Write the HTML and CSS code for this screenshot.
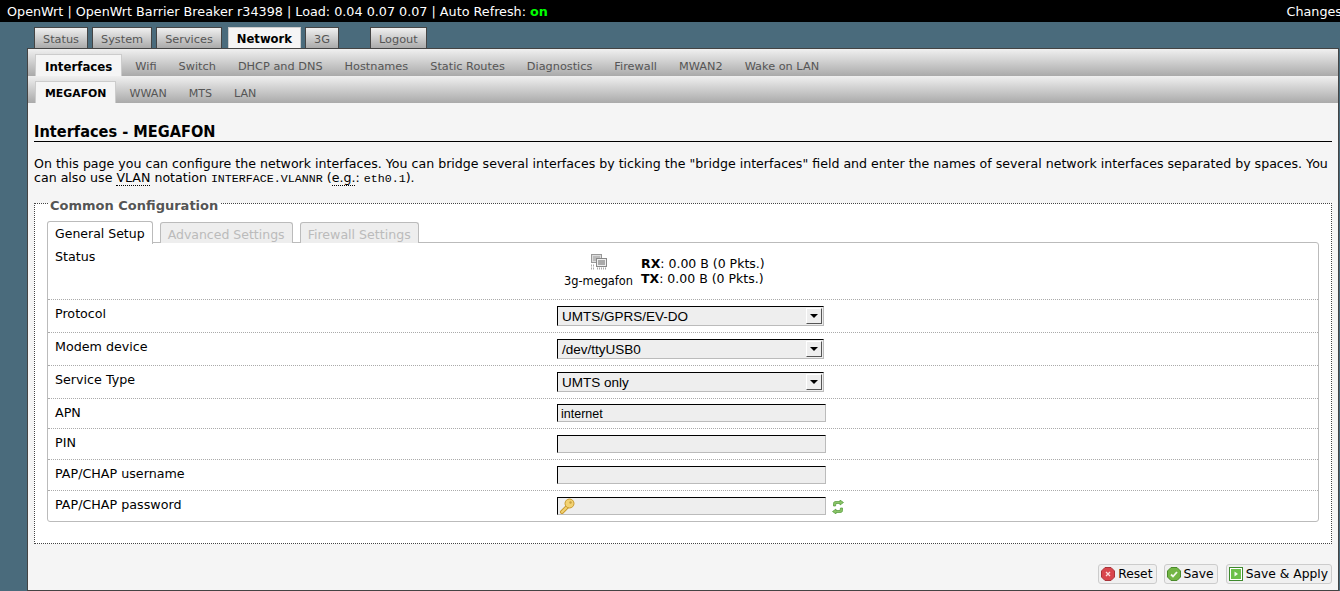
FILE: index.html
```html
<!DOCTYPE html>
<html lang="en">
<head>
<meta charset="utf-8">
<title>Interfaces - MEGAFON</title>
<link rel="stylesheet" href="styles.css">
</head>
<body>
<header class="topbar">
  <span>OpenWrt | OpenWrt Barrier Breaker r34398 | Load: 0.04 0.07 0.07 | Auto Refresh: <b class="on">on</b></span>
  <span class="changes">Changes</span>
</header>
<nav class="mainnav">
  <a class="mtab">Status</a>
  <a class="mtab">System</a>
  <a class="mtab">Services</a>
  <a class="mtab active">Network</a>
  <a class="mtab">3G</a>
  <a class="mtab logout">Logout</a>
</nav>
<main class="maincontent">
  <nav class="subnav first">
    <a class="stab active">Interfaces</a>
    <a class="stab">Wifi</a>
    <a class="stab">Switch</a>
    <a class="stab">DHCP and DNS</a>
    <a class="stab">Hostnames</a>
    <a class="stab">Static Routes</a>
    <a class="stab">Diagnostics</a>
    <a class="stab">Firewall</a>
    <a class="stab">MWAN2</a>
    <a class="stab">Wake on LAN</a>
  </nav>
  <nav class="subnav second">
    <a class="stab active">MEGAFON</a>
    <a class="stab">WWAN</a>
    <a class="stab">MTS</a>
    <a class="stab">LAN</a>
  </nav>
  <section class="content">
    <h2 class="title">Interfaces - MEGAFON</h2>
    <p class="intro">On this page you can configure the network interfaces. You can bridge several interfaces by ticking the "bridge interfaces" field and enter the names of several network interfaces separated by spaces. You can also use <abbr>VLAN</abbr> notation <code>INTERFACE.VLANNR</code> (<abbr>e.g.</abbr>: <code>eth0.1</code>).</p>
    <fieldset class="section">
      <legend>Common Configuration</legend>
      <ul class="ctabs">
        <li class="ctab active">General Setup</li>
        <li class="ctab">Advanced Settings</li>
        <li class="ctab">Firewall Settings</li>
      </ul>
      <div class="panel">
        <div class="row status-row">
          <label>Status</label>
          <div class="field status">
            <div class="ifc">
              <svg class="ifc-icon" width="18" height="18" viewBox="0 0 18 18">
                <rect x="1.500" y="1.500" width="10" height="8" fill="#ddd" stroke="#999"/>
                <rect x="3" y="3" width="7" height="5" fill="#bbb"/>
                <rect x="6.500" y="5.500" width="10" height="8" fill="#eee" stroke="#888"/>
                <rect x="8" y="7" width="7" height="5" fill="#aaa"/>
                <path d="M1 12.500h4M1 15.500h3M7 15.500h10" stroke="#aaa" stroke-width="2" stroke-dasharray="1 1"/>
              </svg>
              <small>3g-megafon</small>
            </div>
            <div class="stats">
              <div><b>RX</b>: 0.00 B (0 Pkts.)</div>
              <div><b>TX</b>: 0.00 B (0 Pkts.)</div>
            </div>
          </div>
        </div>
        <div class="row sel-row">
          <label>Protocol</label>
          <div class="field"><div class="select"><span>UMTS/GPRS/EV-DO</span><i class="arrow"></i></div></div>
        </div>
        <div class="row sel-row">
          <label>Modem device</label>
          <div class="field"><div class="select"><span>/dev/ttyUSB0</span><i class="arrow"></i></div></div>
        </div>
        <div class="row sel-row">
          <label>Service Type</label>
          <div class="field"><div class="select"><span>UMTS only</span><i class="arrow"></i></div></div>
        </div>
        <div class="row input-row apn">
          <label>APN</label>
          <div class="field"><input class="text" value="internet"></div>
        </div>
        <div class="row input-row">
          <label>PIN</label>
          <div class="field"><input class="text"></div>
        </div>
        <div class="row input-row">
          <label>PAP/CHAP username</label>
          <div class="field"><input class="text"></div>
        </div>
        <div class="row input-row last">
          <label>PAP/CHAP password</label>
          <div class="field pass">
            <input class="text">
            <svg class="key" width="16" height="16" viewBox="0 0 16 16">
              <path d="M8.500 8.500 3 14" stroke="#c99a2e" stroke-width="4" stroke-linecap="round"/>
              <path d="M8.500 8.500 3 14" stroke="#f2d272" stroke-width="2" stroke-linecap="round"/>
              <circle cx="10.500" cy="5.500" r="4.500" fill="#f2d272" stroke="#c99a2e"/>
              <circle cx="11.500" cy="4.500" r="1.200" fill="#c8a040"/>
            </svg>
            <svg class="reload" width="12" height="14" viewBox="0 0 12 14">
              <path d="M1.500 6V3.500C1.500 2 2.500 1.500 4 1.500H8V0L11.500 2.500 8 5V3.500H4L3.500 6z" fill="#8cc468" stroke="#4f9a38" stroke-width=".7"/>
              <path d="M10.500 8V10.500C10.500 12 9.500 12.500 8 12.500H4V14L.5 11.500 4 9V10.500H8L8.500 8z" fill="#8cc468" stroke="#4f9a38" stroke-width=".7"/>
            </svg>
          </div>
        </div>
      </div>
    </fieldset>
    <div class="actions">
      <button class="btn">
        <svg width="14" height="14" viewBox="0 0 14 14"><path d="M4 .5h6L13.500 4v6L10 13.500H4L.5 10V4z" fill="#d9464c" stroke="#a83339"/><path d="M5 5l4 4M9 5l-4 4" stroke="#fbdcdc" stroke-width="1.300"/></svg>
        Reset
      </button>
      <button class="btn">
        <svg width="14" height="14" viewBox="0 0 14 14"><path d="M4 .5h6L13.500 4v6L10 13.500H4L.5 10V4z" fill="#72b544" stroke="#4a8a2a"/><path d="M4 7.500l2 2 4-4.500" fill="none" stroke="#f2f8ea" stroke-width="1.800"/></svg>
        Save
      </button>
      <button class="btn">
        <svg width="14" height="14" viewBox="0 0 14 14"><rect x=".5" y=".5" width="13" height="13" fill="#fff" stroke="#3f8a2e"/><rect x="2" y="2" width="10" height="10" fill="#6cc04a"/><path d="M5.500 4.500v5l3.500-2.500z" fill="#f4fbee"/></svg>
        Save &amp; Apply
      </button>
    </div>
  </section>
</main>
</body>
</html>
```
FILE: styles.css
```css
* { box-sizing: border-box; }
html, body { margin: 0; padding: 0; height: 100%; overflow: hidden; }
body {
  background: #4a6b7c;
  font-family: "DejaVu Sans", Verdana, sans-serif;
  font-size: 12.750px;
  color: #000;
}
.topbar {
  height: 22px;
  background: #000;
  color: #fff;
  display: flex;
  justify-content: space-between;
  align-items: center;
  padding-left: 7px;
  white-space: nowrap;
  overflow: hidden;
}
.topbar .on { color: #0f0; }
.changes { flex: none; margin-right: -2px; }
.mainnav {
  display: flex;
  height: 26px;
  padding: 5px 0 0 34px;
  gap: 4px;
}
.mtab {
  display: block;
  height: 21px;
  padding: 0 8px;
  line-height: 23px;
  font-size: 11.300px;
  color: #555;
  background: linear-gradient(#f0f0f0, #aaa);
  border: 1px solid #444;
  border-bottom: 0;
}
.mtab.active {
  background: #f5f5f5;
  color: #000;
  font-weight: bold;
  font-size: 11.600px;
  border-color: #ccc;
  margin-left: 2px;
}
.mtab.logout { margin-left: 27px; }
.maincontent {
  margin: 0 1px 0 27px;
  height: 543px;
  background: #f5f5f5;
  border: 1px solid #444;
}
.subnav {
  display: flex;
  height: 27px;
  padding: 5px 0 0 7px;
  background: linear-gradient(#f0f0f0, #aaa);
}
.stab {
  display: block;
  height: 22px;
  padding: 0 9px;
  margin-right: 4px;
  line-height: 26px;
  font-size: 11.300px;
  color: #555;
}
.stab.active {
  background: #f5f5f5;
  color: #000;
  font-weight: bold;
  font-size: 11.800px;
  border: 1px solid #ccc;
  border-bottom: 0;
  padding: 0 9px;
  line-height: 24px;
}
.second .stab { font-size: 11.100px; }
.second .stab.active { font-size: 10.900px; }
.content { padding: 0 6px 0 6px; }
.title {
  margin: 17px 0 0;
  height: 22px;
  font-family: "DejaVu Sans Condensed", "DejaVu Sans", sans-serif;
  font-stretch: condensed;
  font-size: 16.200px;
  line-height: 23px;
  font-weight: bold;
  border-bottom: 1px solid #000;
}
.intro {
  margin: 15px 0 0;
  line-height: 14px;
  font-size: 12.600px;
}
.intro abbr { border-bottom: 1px dotted #000; }
.intro code { font-family: "Liberation Mono", monospace; font-size: 11.670px; }
.section {
  margin: 8px 0 0;
  padding: 8px 12px 0;
  height: 350px;
  background: #fff;
  border: 1px dotted #444;
  min-inline-size: 0;
}
.section legend {
  margin-left: 1px;
  padding: 4px 2px 0;
  font-size: 13px;
  font-weight: bold;
  color: #555;
  line-height: 15px;
}
.ctabs {
  display: flex;
  list-style: none;
  margin: 0;
  padding: 0;
  gap: 7px;
  height: 22px;
  align-items: flex-end;
  position: relative;
  z-index: 1;
}
.ctab {
  height: 21px;
  padding: 0 7px;
  line-height: 23px;
  font-size: 12.500px;
  color: #bbb;
  background: #eee;
  border: 1px solid #bbb;
  border-bottom: 0;
  border-radius: 3px 3px 0 0;
}
.ctab:last-child { padding: 0 7.500px 0 7px; font-size: 12.600px; }
.ctab.active {
  height: 23px;
  background: #fff;
  color: #000;
  margin-bottom: -1px;
  line-height: 24px;
}
.panel {
  background: #fff;
  border: 1px solid #bbb;
  border-radius: 0 3px 3px 3px;
  height: 280px;
  margin-top: -1px;
}
.row {
  display: flex;
  padding-left: 7px;
  border-bottom: 1px dotted #aaa;
}
.row.last { border-bottom: 0; }
.row label {
  flex: none;
  width: 502px;
  font-size: 12.700px;
  line-height: 15px;
  padding-top: 6px;
}
.status-row { height: 57px; }
.sel-row { height: 33px; }
.input-row { height: 31px; }
.input-row.apn { height: 30px; }
.field { padding-top: 6px; }
.apn .field { padding-top: 5px; }
.field.status { display: flex; padding-top: 10px; padding-left: 7px; gap: 8px; }
.ifc { width: 69px; display: flex; flex-direction: column; align-items: center; }
.ifc-icon { display: block; }
.ifc small { font-size: 11.400px; line-height: 13px; margin-top: 4px; white-space: nowrap; }
.stats { font-size: 12.500px; line-height: 15px; padding-top: 3px; white-space: nowrap; }
.select {
  width: 267px;
  height: 20px;
  display: flex;
  justify-content: space-between;
  background: #eee;
  border: 1px solid;
  border-color: #000 #bbb #bbb #000;
  font-family: "Liberation Sans", Arial, sans-serif;
  font-size: 13.500px;
  line-height: 19px;
  padding-left: 4px;
}
.arrow {
  flex: none;
  position: relative;
  width: 16px;
  height: 16px;
  margin: 1px;
  background: #eee;
  border: 1px solid;
  border-color: #fff #555 #555 #fff;
}
.arrow::after {
  content: "";
  position: absolute;
  left: 3px;
  top: 5px;
  border: 4px solid transparent;
  border-top: 4px solid #000;
  border-bottom: 0;
}
.text {
  display: block;
  width: 269px;
  height: 18px;
  padding: 1px 3px 0;
  margin: 0;
  background: #eee;
  border: 1px solid;
  border-color: #000 #bbb #bbb #000;
  font-family: "Liberation Sans", Arial, sans-serif;
  font-size: 12.500px;
  color: #000;
  outline: 0;
  border-radius: 0;
}
.pass { position: relative; display: flex; align-items: flex-start; gap: 6px; }
.key { position: absolute; left: 2px; top: 7px; }
.reload { margin-top: 3px; }
.actions {
  display: flex;
  justify-content: flex-end;
  gap: 8px;
  margin-top: 20px;
}
.btn {
  display: flex;
  align-items: center;
  gap: 3px;
  height: 20px;
  padding: 0 3px 0 2px;
  background: #f0f0f0;
  border: 1px solid #ccc;
  border-radius: 3px;
  font-family: "DejaVu Sans", sans-serif;
  font-size: 12.300px;
  color: #000;
}
.btn:first-child { margin-right: -1px; }
```
